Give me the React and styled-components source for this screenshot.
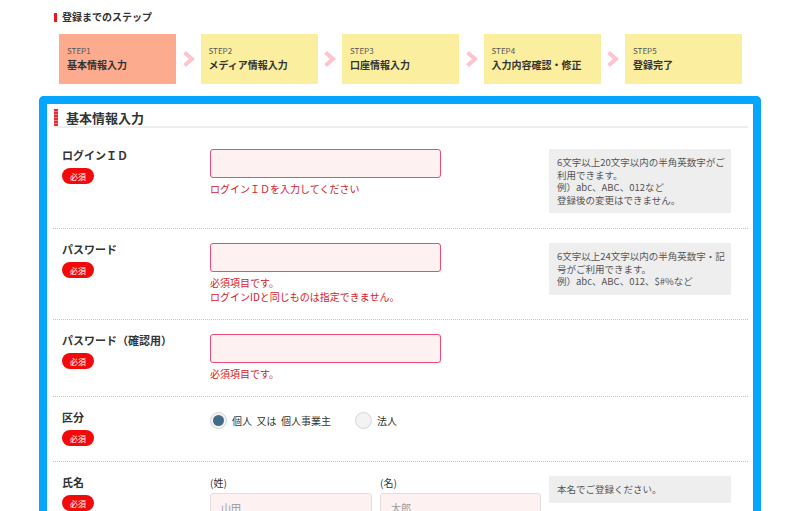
import React from "react";
import styled, { createGlobalStyle } from "styled-components";

const GlobalStyle = createGlobalStyle`
  body {
    margin: 0;
    background: #fff;
    font-family: "Noto Sans CJK JP", "Noto Sans", sans-serif;
    color: #333;
  }
`;

const Page = styled.div`
  width: 722px;
  padding-left: 39px;
  padding-top: 11px;
`;

const StepHeading = styled.div`
  display: flex;
  align-items: center;
  padding-left: 15px;
  height: 12px;
  font-size: 10px;
  font-weight: bold;
  line-height: 12px;
  color: #333;
  &::before {
    content: "";
    width: 3px;
    height: 9px;
    background: #e8161d;
    margin-right: 5px;
  }
`;

const Steps = styled.div`
  display: flex;
  align-items: center;
  margin-top: 11px;
  padding-left: 20px;
`;

const Step = styled.div`
  width: 117px;
  height: 50px;
  box-sizing: border-box;
  padding: 11px 0 0 8px;
  background: ${(p) => (p.$current ? "#fdab8f" : "#fcee9f")};
`;

const StepNo = styled.div`
  font-size: 8px;
  line-height: 12px;
  color: #555;
`;

const StepName = styled.div`
  font-size: 10px;
  line-height: 15px;
  font-weight: bold;
  color: #333;
`;

const Arrow = styled.div`
  width: 24.5px;
  display: flex;
  justify-content: center;
  align-items: center;
`;

const Frame = styled.div`
  margin-top: 12px;
  border: 8px solid #05a6ff;
  border-bottom: none;
  border-radius: 5px 5px 0 0;
  padding: 5px 5px 0 6px;
  min-height: 420px;
`;

const SectionTitle = styled.div`
  position: relative;
  height: 17px;
  padding-left: 13px;
  display: flex;
  align-items: center;
  font-size: 13px;
  font-weight: bold;
  color: #333;
  border-bottom: 2px solid #eee;
  margin-bottom: 7px;
  &::before {
    content: "";
    position: absolute;
    left: 1px;
    top: 0;
    width: 4px;
    height: 17px;
    background: repeating-linear-gradient(
      to bottom,
      #e2303a 0,
      #e2303a 2px,
      #f07a80 2px,
      #f07a80 3px
    );
  }
`;

const Row = styled.div`
  display: grid;
  grid-template-columns: 148px 339px 182px;
  padding: 14px 0 15px 9px;
  border-bottom: 1px dotted #c4c4c4;
`;

const LabelCol = styled.div`
  display: flex;
  flex-direction: column;
  align-items: flex-start;
`;

const Label = styled.div`
  font-size: 11px;
  line-height: 13px;
  font-weight: bold;
  color: #333;
`;

const Required = styled.span`
  margin-top: 6px;
  width: 32px;
  height: 16px;
  border-radius: 8px;
  background: #f20a0a;
  color: #fff;
  font-size: 8px;
  display: flex;
  align-items: center;
  justify-content: center;
`;

const Field = styled.div`
  display: flex;
  flex-direction: column;
`;

const Input = styled.input`
  box-sizing: border-box;
  width: ${(p) => p.$w || 231}px;
  height: 29px;
  margin: 0;
  border: 1px solid ${(p) => (p.$error ? "#ee4a76" : "#e6dede")};
  border-radius: 3px;
  background: #fdf1f1;
  padding: 0 10px;
  font-family: inherit;
  font-size: 10px;
  color: #333;
  outline: none;
  &::placeholder {
    color: #999;
  }
`;

const Error = styled.div`
  margin-top: 4px;
  font-size: 10px;
  line-height: 14px;
  color: #d3212c;
`;

const Hint = styled.div`
  align-self: start;
  background: #eee;
  padding: 7px 8px;
  font-size: 9.5px;
  line-height: 12.5px;
  color: #555;
  white-space: nowrap;
`;

const RadioGroup = styled.div`
  display: flex;
  align-items: center;
  height: 18px;
`;

const RadioItem = styled.label`
  display: flex;
  align-items: center;
  gap: 5px;
  margin-right: 24px;
  font-size: 10px;
  color: #333;
`;

const RadioCircle = styled.span`
  width: 17px;
  height: 17px;
  box-sizing: border-box;
  border-radius: 50%;
  border: 1px solid #d4d4d4;
  background: #f3f3f3;
  display: flex;
  align-items: center;
  justify-content: center;
  &::after {
    content: "";
    width: 11px;
    height: 11px;
    border-radius: 50%;
    background: ${(p) => (p.$checked ? "#436c86" : "transparent")};
  }
`;

const NameGrid = styled.div`
  display: grid;
  grid-template-columns: 162px 161px;
  column-gap: 8px;
`;

const SubLabel = styled.div`
  font-size: 10px;
  line-height: 13px;
  color: #333;
  margin-bottom: 4px;
`;

const steps = [
  { no: "STEP1", name: "基本情報入力", current: true },
  { no: "STEP2", name: "メディア情報入力" },
  { no: "STEP3", name: "口座情報入力" },
  { no: "STEP4", name: "入力内容確認・修正" },
  { no: "STEP5", name: "登録完了" },
];

function Chevron() {
  return (
    <svg width="13" height="16" viewBox="0 0 13 16">
      <polyline
        points="2.5,1.5 10,8 2.5,14.5"
        fill="none"
        stroke="#fdc4cd"
        strokeWidth="4"
      />
    </svg>
  );
}

export default function App() {
  return (
    <Page>
      <GlobalStyle />
      <StepHeading>登録までのステップ</StepHeading>
      <Steps>
        {steps.map((s, i) => (
          <React.Fragment key={s.no}>
            {i > 0 && (
              <Arrow>
                <Chevron />
              </Arrow>
            )}
            <Step $current={s.current}>
              <StepNo>{s.no}</StepNo>
              <StepName>{s.name}</StepName>
            </Step>
          </React.Fragment>
        ))}
      </Steps>

      <Frame>
        <SectionTitle>基本情報入力</SectionTitle>

        <Row>
          <LabelCol>
            <Label>ログインＩＤ</Label>
            <Required>必須</Required>
          </LabelCol>
          <Field>
            <Input $error />
            <Error>ログインＩＤを入力してください</Error>
          </Field>
          <Hint>
            6文字以上20文字以内の半角英数字がご
            <br />
            利用できます。
            <br />
            例）abc、ABC、012など
            <br />
            登録後の変更はできません。
          </Hint>
        </Row>

        <Row>
          <LabelCol>
            <Label>パスワード</Label>
            <Required>必須</Required>
          </LabelCol>
          <Field>
            <Input $error type="password" />
            <Error>
              必須項目です。
              <br />
              ログインIDと同じものは指定できません。
            </Error>
          </Field>
          <Hint>
            6文字以上24文字以内の半角英数字・記
            <br />
            号がご利用できます。
            <br />
            例）abc、ABC、012、$#%など
          </Hint>
        </Row>

        <Row>
          <LabelCol>
            <Label>パスワード（確認用）</Label>
            <Required>必須</Required>
          </LabelCol>
          <Field>
            <Input $error type="password" />
            <Error>必須項目です。</Error>
          </Field>
        </Row>

        <Row>
          <LabelCol>
            <Label>区分</Label>
            <Required>必須</Required>
          </LabelCol>
          <Field>
            <RadioGroup>
              <RadioItem>
                <RadioCircle $checked />
                個人&nbsp;&nbsp;又は&nbsp;&nbsp;個人事業主
              </RadioItem>
              <RadioItem>
                <RadioCircle />
                法人
              </RadioItem>
            </RadioGroup>
          </Field>
        </Row>

        <Row>
          <LabelCol>
            <Label>氏名</Label>
            <Required>必須</Required>
          </LabelCol>
          <NameGrid>
            <div>
              <SubLabel>(姓)</SubLabel>
              <Input $w={162} placeholder="山田" />
            </div>
            <div>
              <SubLabel>(名)</SubLabel>
              <Input $w={161} placeholder="太郎" />
            </div>
          </NameGrid>
          <Hint>本名でご登録ください。</Hint>
        </Row>
      </Frame>
    </Page>
  );
}
